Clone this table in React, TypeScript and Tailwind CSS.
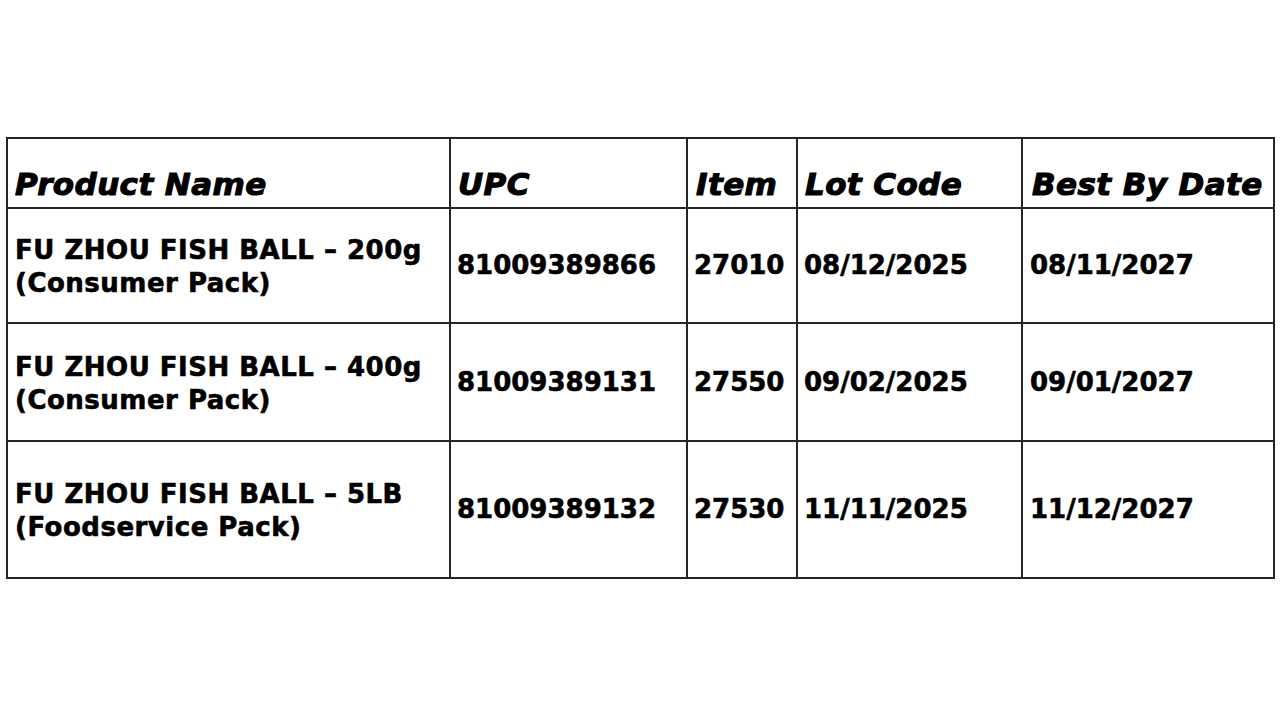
import React from "react";

const rows = [
  {
    name: ["FU ZHOU FISH BALL – 200g", "(Consumer Pack)"],
    upc: "81009389866",
    item: "27010",
    lot: "08/12/2025",
    best: "08/11/2027",
    h: "h-[115px]",
  },
  {
    name: ["FU ZHOU FISH BALL – 400g", "(Consumer Pack)"],
    upc: "81009389131",
    item: "27550",
    lot: "09/02/2025",
    best: "09/01/2027",
    h: "h-[118px]",
  },
  {
    name: ["FU ZHOU FISH BALL – 5LB", "(Foodservice Pack)"],
    upc: "81009389132",
    item: "27530",
    lot: "11/11/2025",
    best: "11/12/2027",
    h: "h-[137px]",
  },
];

const headCell =
  "h-[70px] flex items-end pb-[5px] pl-[7px] border-r-2 border-b-2 border-[#262626] text-[31px] leading-[36px] font-bold italic tracking-[0.4px] text-black [-webkit-text-stroke:1.1px_black] whitespace-nowrap overflow-hidden";
const bodyCell =
  "flex items-center pl-[6px] border-r-2 border-b-2 border-[#262626] text-[26px] leading-[33px] font-bold text-black [-webkit-text-stroke:0.6px_black] whitespace-nowrap overflow-hidden";

export default function App() {
  return (
    <div
      className="w-[1280px] h-[720px] bg-white pt-[137px] pl-[6px]"
      style={{ fontFamily: '"DejaVu Sans", "Liberation Sans", sans-serif' }}
    >
      <div className="grid grid-cols-[443px_237px_110px_225px_252px] w-[1269px] border-l-2 border-t-2 border-[#262626]">
        <div className={headCell}>Product Name</div>
        <div className={headCell}>UPC</div>
        <div className={`${headCell} pl-[8px]`}>Item</div>
        <div className={headCell}>Lot Code</div>
        <div className={`${headCell} pl-[9px]`}>Best By Date</div>
        {rows.map((r) => (
          <React.Fragment key={r.upc}>
            <div className={`${bodyCell} ${r.h} pl-[7px] tracking-[0.5px]`}>
              <div className="pt-[3px]">
                <div>{r.name[0]}</div>
                <div>{r.name[1]}</div>
              </div>
            </div>
            <div className={`${bodyCell} ${r.h}`}>{r.upc}</div>
            <div className={`${bodyCell} ${r.h}`}>{r.item}</div>
            <div className={`${bodyCell} ${r.h}`}>{r.lot}</div>
            <div className={`${bodyCell} ${r.h} pl-[7px]`}>{r.best}</div>
          </React.Fragment>
        ))}
      </div>
    </div>
  );
}
